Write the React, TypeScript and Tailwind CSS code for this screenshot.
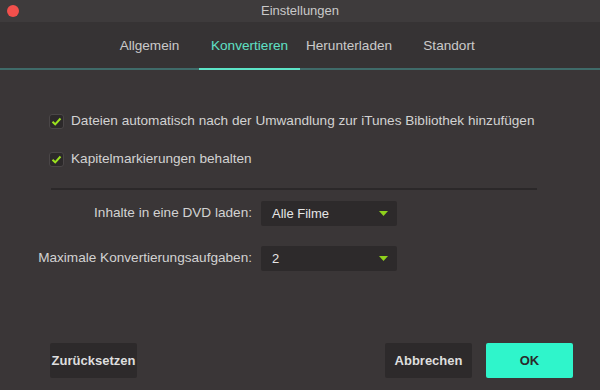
const TABS = ['Allgemein', 'Konvertieren', 'Herunterladen', 'Standort'];
const TAB_W = ['w-[99px]', 'w-[101px]', 'w-[98px]', 'w-[102px]'];

function Check() {
  return (
    <span className="flex h-[15px] w-[15px] shrink-0 items-center justify-center rounded-[3px] border border-[#4a4647] bg-[#2c292a]">
      <svg width="11" height="9" viewBox="0 0 11 9">
        <path d="M1.5 4.8 L4.2 7.3 L9.5 1.5" fill="none" stroke="#9be11f" strokeWidth="2" />
      </svg>
    </span>
  );
}

function Select({ value }: { value: string }) {
  return (
    <div className="flex h-[25px] w-[136px] items-center justify-between rounded-[2px] bg-[#2d2a2b] pl-[11px] pr-[9px] text-[13px] text-[#e6e6e6]">
      <span>{value}</span>
      <svg width="9" height="5" viewBox="0 0 9 5">
        <path d="M0 0 L9 0 L4.5 5 Z" fill="#8fd11c" />
      </svg>
    </div>
  );
}

export default function App() {
  return (
    <div
      className="flex h-[390px] w-[600px] flex-col overflow-hidden bg-[#3a3637] text-[#d2d2d2]"
      style={{ fontFamily: '"Liberation Sans", Arial, sans-serif' }}
    >
      {/* title bar */}
      <div className="relative flex h-[22px] items-center justify-center bg-[#3e3b3c] text-[13px] text-[#c9c9c9]">
        <span className="absolute left-[7px] top-[5px] h-[12px] w-[12px] rounded-full bg-[#f2504c]" />
        Einstellungen
      </div>

      {/* tabs */}
      <div className="flex h-[48px] items-end bg-[#363334]">
        <div className="flex w-full border-b-2 border-[#3f6b69] pl-[100px]">
          {TABS.map((t, i) => (
            <div
              key={t}
              className={`-mb-[2px] flex h-[46px] items-center justify-center border-b-2 text-[13.6px] ${TAB_W[i]} ${
                i === 1 ? 'border-[#5de4c7] text-[#5fe0c5]' : 'border-transparent text-[#cacaca]'
              }`}
            >
              {t}
            </div>
          ))}
        </div>
      </div>

      {/* options */}
      <div className="flex flex-col gap-[18px] pl-[49px] pt-[41px] text-[13.6px]">
        <label className="flex items-center gap-[7px]">
          <Check />
          Dateien automatisch nach der Umwandlung zur iTunes Bibliothek hinzufügen
        </label>
        <label className="flex items-center gap-[7px]">
          <Check />
          Kapitelmarkierungen behalten
        </label>
      </div>

      <div className="ml-[51px] mt-[18px] h-[2px] w-[486px] bg-[#2b2829]" />

      <div className="mt-[11px] flex flex-col gap-[20px] text-[13.6px]">
        <div className="flex items-center">
          <span className="w-[253px] pr-[1px] text-right">Inhalte in eine DVD laden:</span>
          <div className="ml-[8px]">
            <Select value="Alle Filme" />
          </div>
        </div>
        <div className="flex items-center">
          <span className="w-[253px] pr-[1px] text-right">Maximale Konvertierungsaufgaben:</span>
          <div className="ml-[8px]">
            <Select value="2" />
          </div>
        </div>
      </div>

      {/* buttons */}
      <div className="mt-auto mb-[12px] flex items-center px-[50px] pr-[27px]">
        <button className="h-[35px] w-[87px] rounded-[2px] bg-[#2d2a2b] text-[13px] font-bold text-[#dedede]">
          Zurücksetzen
        </button>
        <button className="ml-auto h-[35px] w-[87px] rounded-[2px] bg-[#2d2a2b] text-[13px] font-bold text-[#dedede]">
          Abbrechen
        </button>
        <button className="ml-[14px] h-[35px] w-[87px] rounded-[2px] bg-[#2ff5cb] text-[13px] font-bold text-[#2a2a2a]">
          OK
        </button>
      </div>
    </div>
  );
}
